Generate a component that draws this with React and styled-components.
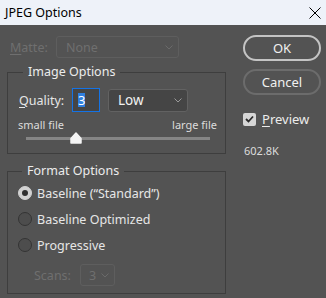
import React from "react";
import styled, { createGlobalStyle } from "styled-components";

const GlobalStyle = createGlobalStyle`
  body {
    margin: 0;
    background: #535353;
    font-family: "Noto Sans", "Open Sans", sans-serif;
  }
`;

const Window = styled.div`
  width: 326px;
  height: 298px;
  background: #535353;
  color: #e6e6e6;
  font-size: 12.5px;
  overflow: hidden;
`;

const TitleBar = styled.div`
  height: 25px;
  background: #eef2f9;
  display: flex;
  align-items: center;
  justify-content: space-between;
  padding: 0 5px 0 5px;
  box-sizing: border-box;
`;

const Title = styled.span`
  color: #000;
  font-size: 12.5px;
  line-height: 25px;
`;

const Body = styled.div`
  display: flex;
  padding: 10px 0 0 7px;
`;

const LeftColumn = styled.div`
  width: 219px;
  display: flex;
  flex-direction: column;
`;

const RightColumn = styled.div`
  width: 78px;
  margin-left: 17px;
  display: flex;
  flex-direction: column;
`;

const MatteRow = styled.div`
  display: flex;
  align-items: center;
  height: 22px;
  margin-top: 1px;
  padding-left: 3px;
`;

const FieldLabel = styled.span`
  width: ${(p) => p.$width}px;
  margin-left: ${(p) => p.$indent || 0}px;
  flex: none;
  color: ${(p) => (p.$disabled ? "#6f6f6f" : "#e6e6e6")};
  font-size: 12.5px;
  u {
    text-decoration: underline;
    text-underline-offset: 2px;
  }
`;

const Select = styled.div`
  width: ${(p) => p.$width}px;
  height: ${(p) => p.$height || 22}px;
  box-sizing: border-box;
  border: 1px solid ${(p) => (p.$disabled ? "#5e5e5e" : "#626262")};
  border-radius: 3px;
  background: ${(p) => (p.$disabled ? "#535353" : "#454545")};
  color: ${(p) => (p.$disabled ? "#6f6f6f" : "#f2f2f2")};
  display: flex;
  align-items: center;
  justify-content: space-between;
  padding: 0 5px 0 ${(p) => p.$padLeft || 9}px;
  font-size: ${(p) => p.$fontSize || 12.5}px;
`;

const Group = styled.fieldset`
  margin: ${(p) => p.$top}px 0 0 0;
  border: 1px solid #3e3e3e;
  padding: ${(p) => p.$padTop}px 8px ${(p) => p.$padBottom}px ${(p) => p.$padLeft}px;
  min-width: 0;
`;

const Legend = styled.legend`
  margin-left: 4px;
  padding: 0 5px;
  line-height: 18px;
  font-size: 12.5px;
  color: #ececec;
`;

const QualityRow = styled.div`
  display: flex;
  align-items: center;
  height: 24px;
`;

const QualityInput = styled.div`
  width: 28px;
  height: 24px;
  box-sizing: border-box;
  border: 1px solid #1473e6;
  background: #454545;
  display: flex;
  align-items: center;
  padding-left: 5px;
  margin-right: 8px;
`;

const Selected = styled.span`
  background: #2f7fe0;
  color: #fff;
  line-height: 14px;
  font-size: 13px;
`;

const SliderLabels = styled.div`
  display: flex;
  justify-content: space-between;
  font-size: 11px;
  line-height: 14px;
  margin-top: 6px;
  color: #dcdcdc;
  margin-left: -1px;
`;

const Slider = styled.div`
  position: relative;
  height: 12px;
  margin: 0 7px;
  display: flex;
  align-items: center;
`;

const Track = styled.div`
  height: 3px;
  width: 100%;
  background: #858585;
`;

const Thumb = styled.svg`
  position: absolute;
  left: ${(p) => p.$left}px;
  top: 0;
`;

const RadioRow = styled.div`
  display: flex;
  align-items: center;
  height: 26px;
  gap: 5px;
`;

const Radio = styled.span`
  width: 14px;
  height: 14px;
  box-sizing: border-box;
  border-radius: 50%;
  flex: none;
  display: flex;
  align-items: center;
  justify-content: center;
  background: ${(p) => (p.$checked ? "#d2d2d2" : "#4d4d4d")};
  border: 1px solid ${(p) => (p.$checked ? "#d2d2d2" : "#343434")};
  &::after {
    content: "";
    display: ${(p) => (p.$checked ? "block" : "none")};
    width: 6px;
    height: 6px;
    border-radius: 50%;
    background: #303030;
  }
`;

const ScansRow = styled.div`
  display: flex;
  align-items: center;
  height: 22px;
  margin-top: 6px;
`;

const Button = styled.div`
  height: 26px;
  box-sizing: border-box;
  border: 2px solid ${(p) => (p.$primary ? "#c4c4c4" : "#6c6c6c")};
  border-radius: 13px;
  display: flex;
  align-items: center;
  justify-content: center;
  font-size: 13px;
  color: #f0f0f0;
  margin-top: ${(p) => p.$top || 0}px;
`;

const PreviewRow = styled.div`
  display: flex;
  align-items: center;
  height: 18px;
  margin-top: 15px;
  gap: 6px;
  font-size: 13px;
  color: #ececec;
  u {
    text-decoration: underline;
    text-underline-offset: 2px;
  }
`;

const CheckBox = styled.span`
  width: 13px;
  height: 13px;
  border-radius: 2px;
  background: #d6d6d6;
  display: flex;
  align-items: center;
  justify-content: center;
  flex: none;
`;

const SizeText = styled.div`
  margin-top: 16px;
  font-size: 11px;
  line-height: 14px;
  color: #dcdcdc;
  padding-left: 1px;
`;

const Chevron = ({ color }) => (
  <svg width="8" height="5" viewBox="0 0 8 5">
    <path d="M0.5 0.5 L4 4 L7.5 0.5" fill="none" stroke={color} strokeWidth="1" />
  </svg>
);

const CloseIcon = () => (
  <svg width="12" height="12" viewBox="0 0 12 12">
    <path d="M0.5 0.5 L11.5 11.5 M11.5 0.5 L0.5 11.5" stroke="#000" strokeWidth="1" />
  </svg>
);

export default function App() {
  return (
    <>
      <GlobalStyle />
      <Window>
        <TitleBar>
          <Title>JPEG Options</Title>
          <CloseIcon />
        </TitleBar>
        <Body>
          <LeftColumn>
            <MatteRow>
              <FieldLabel $width={46} $disabled>
                <u>M</u>atte:
              </FieldLabel>
              <Select $width={123} $disabled>
                None
                <Chevron color="#6a6a6a" />
              </Select>
            </MatteRow>

            <Group $top={5} $padTop={7} $padBottom={9} $padLeft={11}>
              <Legend>Image Options</Legend>
              <QualityRow>
                <FieldLabel $width={53}>
                  <u>Q</u>uality:
                </FieldLabel>
                <QualityInput>
                  <Selected>3</Selected>
                </QualityInput>
                <Select $width={80} $height={23} $fontSize={13.5}>
                  Low
                  <Chevron color="#9a9a9a" />
                </Select>
              </QualityRow>
              <SliderLabels>
                <span>small file</span>
                <span>large file</span>
              </SliderLabels>
              <Slider>
                <Track />
                <Thumb $left={44} width="12" height="12" viewBox="0 0 12 12">
                  <path
                    d="M6 1 L11 6.5 L11 11 L1 11 L1 6.5 Z"
                    fill="#f4f4f4"
                    stroke="#f4f4f4"
                    strokeWidth="1.5"
                    strokeLinejoin="round"
                  />
                </Thumb>
              </Slider>
            </Group>

            <Group $top={8} $padTop={0} $padBottom={7} $padLeft={10}>
              <Legend>Format Options</Legend>
              <RadioRow>
                <Radio $checked />
                Baseline (“Standard”)
              </RadioRow>
              <RadioRow>
                <Radio />
                Baseline Optimized
              </RadioRow>
              <RadioRow>
                <Radio />
                Progressive
              </RadioRow>
              <ScansRow>
                <FieldLabel $width={46} $indent={16} $disabled>
                  Scans:
                </FieldLabel>
                <Select $width={35} $disabled $padLeft={8}>
                  3
                  <Chevron color="#6a6a6a" />
                </Select>
              </ScansRow>
            </Group>
          </LeftColumn>

          <RightColumn>
            <Button $primary>OK</Button>
            <Button $top={8}>Cancel</Button>
            <PreviewRow>
              <CheckBox>
                <svg width="9" height="8" viewBox="0 0 9 8">
                  <path d="M1 4 L3.5 6.5 L8 1.5" fill="none" stroke="#2a2a2a" strokeWidth="1.8" />
                </svg>
              </CheckBox>
              <span>
                <u>P</u>review
              </span>
            </PreviewRow>
            <SizeText>602.8K</SizeText>
          </RightColumn>
        </Body>
      </Window>
    </>
  );
}
